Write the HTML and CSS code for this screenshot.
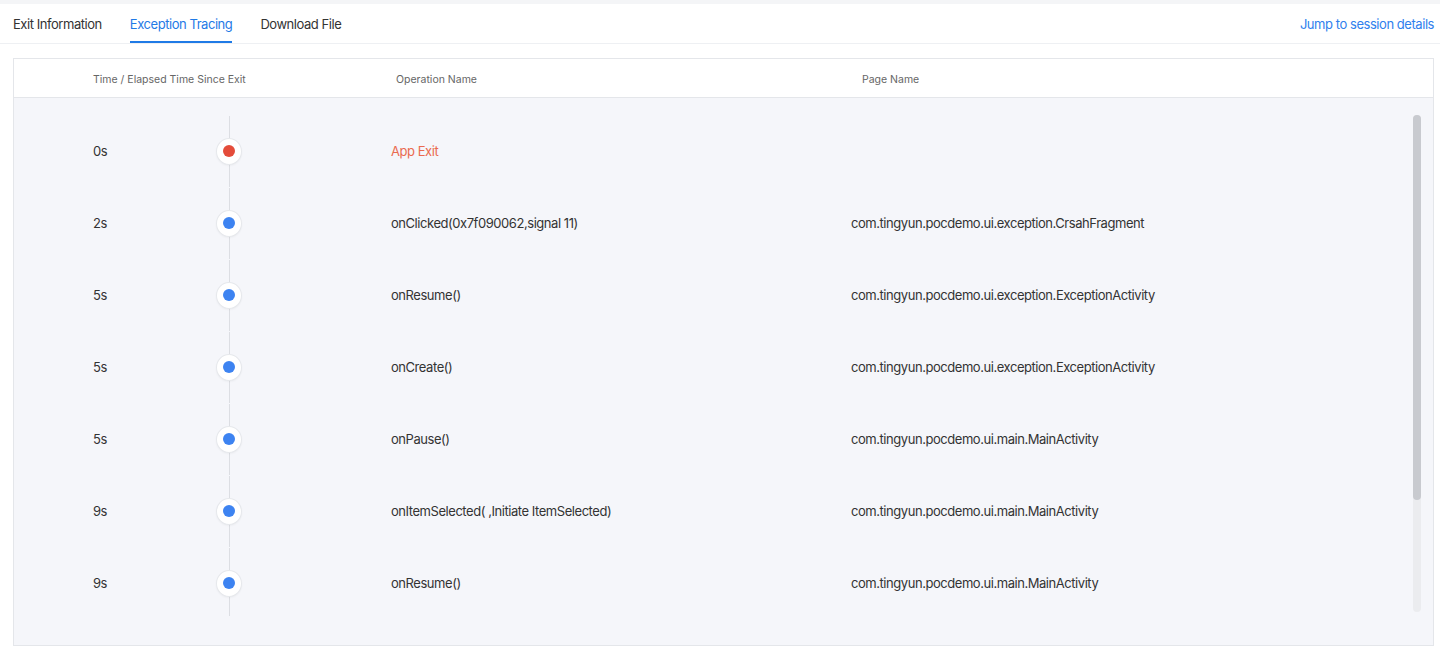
FILE: index.html
```html
<!DOCTYPE html>
<html lang="en">
<head>
    <meta charset="UTF-8">
    <meta name="viewport" content="width=device-width, initial-scale=1.0">
    <title>Exception Tracing</title>
    <link rel="stylesheet" href="styles.css">
</head>
<body>

<div class="page">
    <!-- Tab bar -->
    <div class="tabs">
        <div class="tab-list">
            <span class="tab">Exit Information</span>
            <span class="tab active">Exception Tracing</span>
            <span class="tab">Download File</span>
        </div>
        <a class="jump-link" href="#">Jump to session details</a>
    </div>

    <!-- Trace table -->
    <div class="trace-table">
        <div class="trace-head">
            <div class="col-time">Time / Elapsed Time Since Exit</div>
            <div class="col-op">Operation Name</div>
            <div class="col-page">Page Name</div>
        </div>
        <div class="trace-body">
            <div class="trace-row">
                <div class="cell-time">0s</div>
                <div class="cell-dot"><span class="dot exit"></span></div>
                <div class="cell-op exit-text">App Exit</div>
                <div class="cell-page"></div>
            </div>
            <div class="trace-row">
                <div class="cell-time">2s</div>
                <div class="cell-dot"><span class="dot"></span></div>
                <div class="cell-op">onClicked(0x7f090062,signal 11)</div>
                <div class="cell-page">com.tingyun.pocdemo.ui.exception.CrsahFragment</div>
            </div>
            <div class="trace-row">
                <div class="cell-time">5s</div>
                <div class="cell-dot"><span class="dot"></span></div>
                <div class="cell-op">onResume()</div>
                <div class="cell-page">com.tingyun.pocdemo.ui.exception.ExceptionActivity</div>
            </div>
            <div class="trace-row">
                <div class="cell-time">5s</div>
                <div class="cell-dot"><span class="dot"></span></div>
                <div class="cell-op">onCreate()</div>
                <div class="cell-page">com.tingyun.pocdemo.ui.exception.ExceptionActivity</div>
            </div>
            <div class="trace-row">
                <div class="cell-time">5s</div>
                <div class="cell-dot"><span class="dot"></span></div>
                <div class="cell-op">onPause()</div>
                <div class="cell-page">com.tingyun.pocdemo.ui.main.MainActivity</div>
            </div>
            <div class="trace-row">
                <div class="cell-time">9s</div>
                <div class="cell-dot"><span class="dot"></span></div>
                <div class="cell-op">onItemSelected( ,Initiate ItemSelected)</div>
                <div class="cell-page">com.tingyun.pocdemo.ui.main.MainActivity</div>
            </div>
            <div class="trace-row last">
                <div class="cell-time">9s</div>
                <div class="cell-dot"><span class="dot"></span></div>
                <div class="cell-op">onResume()</div>
                <div class="cell-page">com.tingyun.pocdemo.ui.main.MainActivity</div>
            </div>

            <!-- scrollbar overlay -->
            <div class="scroll-track">
                <div class="scroll-thumb"></div>
            </div>
        </div>
    </div>
</div>

</body>
</html>
```

FILE: styles.css
```css
* {
    padding: 0;
    margin: 0;
    box-sizing: border-box;
}

body {
    font-family: Inter, "Noto Sans", Arial, sans-serif;
    background-color: #f4f5f7;
    color: #333;
    padding-top: 4px;
}

.page {
    background-color: #fff;
    height: 644px;
    padding: 0 6px 0 13px;
}

/* Tabs */
.tabs {
    display: flex;
    justify-content: space-between;
    align-items: stretch;
    height: 40px;
    border-bottom: 1px solid #eef0f3;
    margin: 0 -6px 0 -13px;
    padding: 0 6px 0 13px;
}

.tab-list {
    display: flex;
    gap: 28px;
}

.tab {
    display: flex;
    align-items: center;
    font-size: 13px;
    letter-spacing: -0.45px;
    color: #333;
    border-bottom: 2px solid transparent;
    padding-top: 2px;
}

.tab.active {
    color: #1f7ae6;
    border-bottom-color: #1f7ae6;
}

.jump-link {
    display: flex;
    align-items: center;
    font-size: 13px;
    letter-spacing: -0.45px;
    color: #2f80ed;
    text-decoration: none;
    padding-top: 1px;
}

/* Table */
.trace-table {
    margin-top: 14px;
    border: 1px solid #e4e6ea;
    height: 588px;
    display: flex;
    flex-direction: column;
}

.trace-head {
    display: grid;
    grid-template-columns: 303px 466px 1fr;
    align-items: center;
    height: 39px;
    padding-left: 79px;
    padding-top: 2px;
    border-bottom: 1px solid #e4e6ea;
    font-size: 10.5px;
    color: #666;
    background-color: #fff;
}

.trace-body {
    position: relative;
    flex: 1;
    background-color: #f5f6fa;
    padding-top: 17px;
    overflow: hidden;
}

.trace-row {
    display: grid;
    grid-template-columns: 123px 175px 460px 1fr;
    align-items: center;
    height: 72px;
    padding-left: 79px;
    font-size: 13px;
    letter-spacing: -0.45px;
    color: #333;
}

.cell-dot {
    position: relative;
    width: 26px;
    height: 100%;
    display: flex;
    align-items: center;
    justify-content: center;
}

.cell-dot::before {
    content: "";
    position: absolute;
    top: 1px;
    bottom: 0;
    left: 12.5px;
    width: 1px;
    background-color: #dcdee3;
}

.trace-row.last .cell-dot::before {
    bottom: 3px;
}

.dot {
    position: relative;
    width: 27px;
    height: 27px;
    border-radius: 50%;
    background-color: #fff;
    border: 1px solid #e6e8ec;
    box-shadow: 0 1px 2px rgba(0, 0, 0, 0.04);
    display: flex;
    align-items: center;
    justify-content: center;
}

.dot::after {
    content: "";
    width: 12px;
    height: 12px;
    border-radius: 50%;
    background-color: #3d83f1;
}

.dot.exit::after {
    background-color: #e44c3a;
}

.exit-text {
    color: #ea6a4f;
}

/* Scrollbar */
.scroll-track {
    position: absolute;
    top: 17px;
    right: 12px;
    width: 8px;
    height: 497px;
    border-radius: 4px;
    background-color: #ebecef;
}

.scroll-thumb {
    height: 385px;
    border-radius: 4px;
    background-color: #c8cacf;
}
```
